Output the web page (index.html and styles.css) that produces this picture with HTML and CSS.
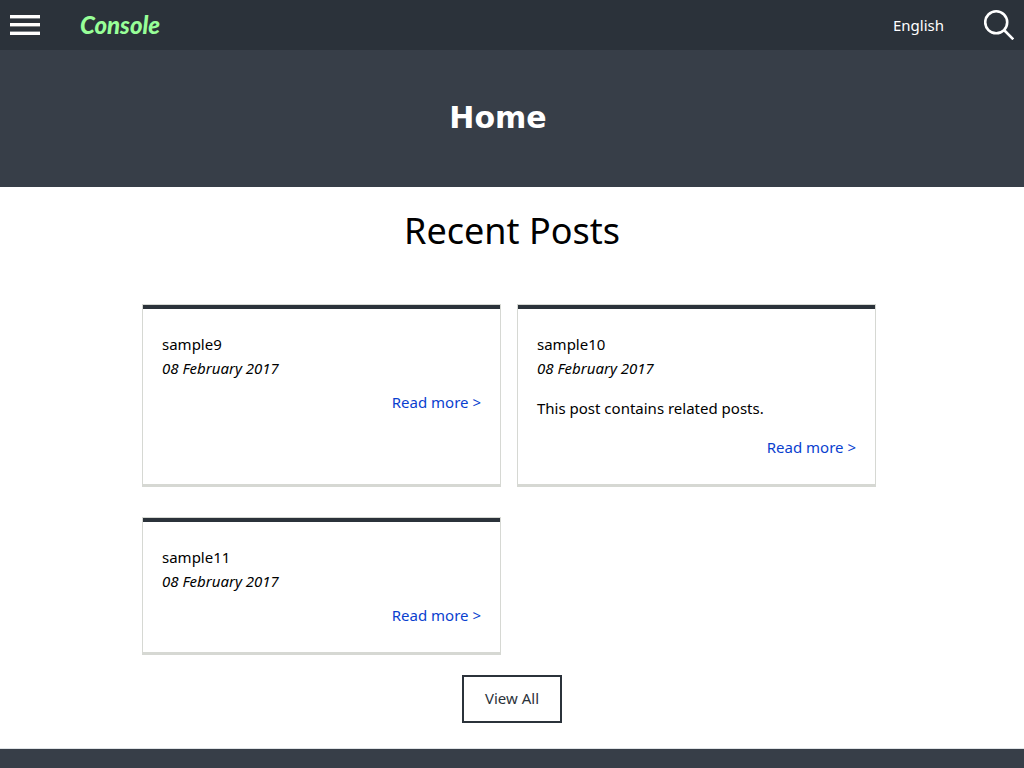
FILE: index.html
```html
<!DOCTYPE html>
<html lang="en">
<head>
<meta charset="utf-8">
<meta name="viewport" content="width=device-width, initial-scale=1">
<title>Console</title>
<link rel="stylesheet" href="styles.css">
</head>
<body>
<header class="topbar">
  <button class="icon-button" type="button" aria-label="Menu">
    <svg width="30" height="30" viewBox="0 0 30 30" fill="#fff" aria-hidden="true"><path d="M0 5h30v3H0zM0 13h30v3H0zM0 22h30v3H0z"/><path d="M0 8h30v1H0zM0 16h30v1H0zM0 21h30v1H0z" opacity=".4"/></svg>
  </button>
  <a class="logo" href="#">Console</a>
  <a class="language" href="#">English</a>
  <button class="icon-button" type="button" aria-label="Search">
    <svg width="30" height="30" viewBox="0 0 30 30" fill="none" stroke="#fff" stroke-width="2.6" aria-hidden="true"><circle cx="12.2" cy="12.3" r="11"/><path d="M20 20l9.3 9.3"/></svg>
  </button>
</header>
<div class="hero"><h1 class="hero-title">Home</h1></div>
<main class="content">
  <h2 class="section-title">Recent Posts</h2>
  <div class="posts">
    <article class="card">
      <h3 class="card-title">sample9</h3>
      <time class="date" datetime="2017-02-08">08 February 2017</time>
      <a class="more" href="#">Read more &gt;</a>
    </article>
    <article class="card">
      <h3 class="card-title">sample10</h3>
      <time class="date" datetime="2017-02-08">08 February 2017</time>
      <p class="excerpt">This post contains related posts.</p>
      <a class="more" href="#">Read more &gt;</a>
    </article>
    <article class="card">
      <h3 class="card-title">sample11</h3>
      <time class="date" datetime="2017-02-08">08 February 2017</time>
      <a class="more" href="#">Read more &gt;</a>
    </article>
  </div>
  <a class="view-all" href="#">View All</a>
</main>
<footer class="footer"></footer>
</body>
</html>
```
FILE: styles.css
```css
* { box-sizing: border-box; }
body {
  margin: 0;
  min-height: 100vh;
  display: flex;
  flex-direction: column;
  background: #fff;
  color: #000;
  font: 15px/24px "Noto Sans", "Open Sans", sans-serif;
}
a { text-decoration: none; }
.topbar {
  display: flex;
  align-items: center;
  height: 50px;
  padding: 0 10px;
  background: #2b323a;
}
.icon-button {
  display: flex;
  padding: 0;
  border: 0;
  background: none;
  cursor: pointer;
}
.logo {
  margin: 0 auto 0 40px;
  color: #98ff98;
  font: italic 900 24px/32px Lato, sans-serif;
}
.language {
  margin-right: 40px;
  color: #fff;
}
.hero {
  padding: 48px 28px 49px 0;
  background: #373e48;
  text-align: center;
}
.hero-title {
  margin: 0;
  color: #fff;
  font: bold 30px/40px "DejaVu Sans", sans-serif;
}
.content {
  display: flex;
  flex-direction: column;
  align-items: center;
  padding: 20px 16px 25px;
}
.section-title {
  margin: 0 0 49px;
  font-size: 36px;
  font-weight: 400;
  line-height: 48px;
}
.posts {
  display: grid;
  grid-template-columns: repeat(2, 1fr);
  gap: 30px 16px;
  width: 100%;
  max-width: 740px;
  padding-right: 6px;
  margin-bottom: 20px;
}
.card {
  display: flex;
  flex-direction: column;
  padding: 27px 19px 25px;
  border: 1px solid #d6d8d3;
  border-bottom-width: 3px;
  box-shadow: inset 0 4px #2b323a;
}
.card-title {
  margin: 0;
  font-size: 15px;
  font-weight: 400;
}
.date { font-style: italic; }
.excerpt { margin: 16px 0 5px; }
.more {
  align-self: flex-end;
  margin-top: 10px;
  color: #0a3fcf;
}
.view-all {
  padding: 9px 21px 11px;
  border: 2px solid #2b323a;
  color: #2b323a;
}
.footer {
  flex: 1;
  min-height: 20px;
  border-top: 1px solid #dfe3e6;
  background: #373e48;
}
```
